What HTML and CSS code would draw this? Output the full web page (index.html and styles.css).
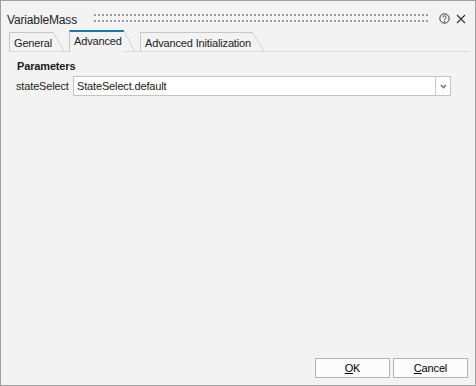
FILE: index.html
```html
<!DOCTYPE html>
<html>
<head>
<meta charset="utf-8">
<link rel="stylesheet" href="styles.css">
</head>
<body>
<div class="window">
  <div class="titlebar">
    <span class="title">VariableMass</span>
    <div class="grip"></div>
    <svg class="help" width="11" height="11" viewBox="0 0 11 11">
      <circle cx="5.5" cy="5.5" r="4.7" fill="none" stroke="#333" stroke-width="1"/>
      <path d="M3.9 4.4 A1.6 1.6 0 1 1 6.3 5.8 C5.8 6.1 5.5 6.4 5.5 7.1" fill="none" stroke="#333" stroke-width="1"/>
      <circle cx="5.5" cy="8.5" r="0.65" fill="#333"/>
    </svg>
    <svg class="close" width="10" height="10" viewBox="0 0 10 10">
      <path d="M1 1 L9 9 M9 1 L1 9" stroke="#333" stroke-width="1.1" fill="none"/>
    </svg>
  </div>
  <div class="tabbar">
    <div class="tab"><div class="tab-body tb-general">General</div><div class="tab-slant"></div></div>
    <div class="tab active"><div class="tab-body tb-advanced">Advanced</div><div class="tab-slant"></div></div>
    <div class="tab"><div class="tab-body tb-init">Advanced Initialization</div><div class="tab-slant slant-wide"></div></div>
  </div>
  <div class="pane">
    <div class="group-title">Parameters</div>
    <div class="param-row">
      <span class="param-label">stateSelect</span>
      <div class="combo">
        <span class="combo-text">StateSelect.default</span>
        <span class="combo-btn">
          <svg width="7" height="5" viewBox="0 0 7 5"><path d="M1 1 L3.5 3.5 L6 1" fill="none" stroke="#7a7a7a" stroke-width="1.6"/></svg>
        </span>
      </div>
    </div>
  </div>
  <div class="footer">
    <button class="btn"><u>O</u>K</button>
    <button class="btn"><u>C</u>ancel</button>
  </div>
</div>
</body>
</html>
```
FILE: styles.css
```css
* { box-sizing: border-box; }
body {
  margin: 0;
  font-family: "Liberation Sans", Arial, sans-serif;
  font-size: 11px;
  letter-spacing: -0.15px;
  color: #1e1e1e;
}
.window {
  width: 476px;
  height: 386px;
  border: 1px solid #a0a0a0;
  background: #f3f3f3;
  display: flex;
  flex-direction: column;
}
.titlebar {
  height: 29px;
  display: flex;
  align-items: flex-start;
  padding: 0 9px 0 6px;
}
.title {
  font-size: 12px;
  line-height: 14px;
  margin-top: 12px;
  color: #222;
}
.grip {
  flex: 1;
  height: 8px;
  margin: 13px 9px 0 17px;
  background-image:
    linear-gradient(90deg, #9c9c9c 2px, transparent 2px),
    linear-gradient(90deg, #9c9c9c 2px, transparent 2px);
  background-size: 4px 2px, 4px 2px;
  background-repeat: repeat-x, repeat-x;
  background-position: 0 0, 0 6px;
}
.help { margin-top: 12px; }
.close { margin-top: 13px; margin-left: 6px; }

.tabbar {
  height: 22px;
  display: flex;
  align-items: flex-end;
  margin: 0 5px 0 8px;
  border-bottom: 1px solid #dadada;
}
.tab {
  display: flex;
  height: 19px;
  margin-right: 5px;
}
.tab.active {
  height: 22px;
  margin-bottom: -1px;
}
.tab-body {
  border-left: 1px solid #c8c8c8;
  border-top: 1px solid #c8c8c8;
  padding: 4px 0 0 4px;
  line-height: 13px;
  white-space: nowrap;
  color: #222;
}
.tb-general { width: 44px; }
.tb-advanced { width: 55px; }
.tb-init { width: 112px; }
.tab.active .tab-body {
  border-top: 2px solid #1a7ca6;
  padding-top: 3px;
  background: #f3f3f3;
}
.tab-slant {
  width: 11px;
  background: linear-gradient(to top right, transparent calc(50% - 0.6px), #c8c8c8 50%, transparent calc(50% + 0.6px));
}
.tab.active .tab-slant {
  margin-top: 1px;
}
.slant-wide { width: 12px; }

.pane {
  flex: 1;
  padding: 8px 24px 0 14px;
}
.group-title {
  font-weight: bold;
  line-height: 13px;
  margin-left: 2px;
  color: #1a1a1a;
}
.param-row {
  display: flex;
  align-items: center;
  margin-top: 3px;
  padding-left: 1px;
}
.param-label {
  width: 57px;
  line-height: 13px;
}
.combo {
  flex: 1;
  height: 20px;
  display: flex;
  border: 1px solid #c3c3c3;
  background: #fff;
}
.combo-text {
  flex: 1;
  padding-left: 3px;
  line-height: 18px;
  color: #1a1a1a;
}
.combo-btn {
  width: 15px;
  border-left: 1px solid #c8c8c8;
  display: flex;
  align-items: center;
  justify-content: center;
}

.footer {
  display: flex;
  justify-content: flex-end;
  gap: 3px;
  padding: 0 7px 7px 0;
}
.btn {
  width: 75px;
  height: 20px;
  border: 1px solid #b4b4b4;
  background: #fcfcfc;
  font-family: inherit;
  font-size: 11px;
  letter-spacing: -0.15px;
  color: #000;
  padding: 0;
  line-height: 18px;
}
```
